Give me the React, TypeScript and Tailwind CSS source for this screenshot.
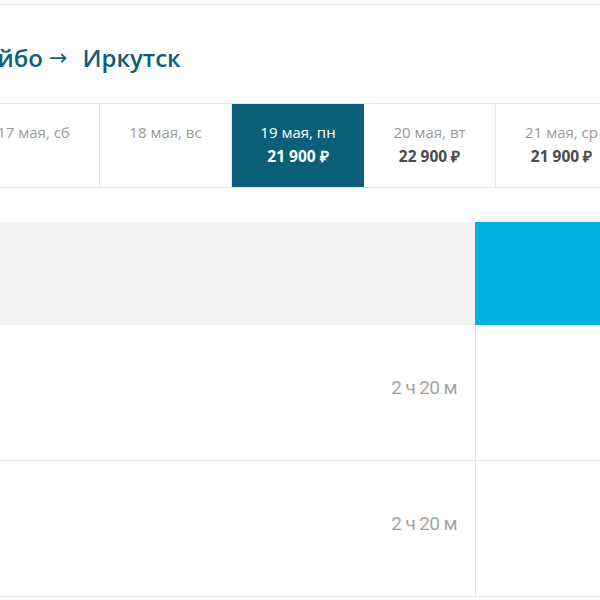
const days = [
  { date: '17 мая, сб', price: '' },
  { date: '18 мая, вс', price: '' },
  { date: '19 мая, пн', price: '21 900 ₽', active: true },
  { date: '20 мая, вт', price: '22 900 ₽' },
  { date: '21 мая, ср', price: '21 900 ₽' },
];

const flights = ['2 ч 20 м', '2 ч 20 м'];

const App = () => {
  return (
    <div className="w-[600px] h-[600px] overflow-hidden bg-white font-['Open_Sans',sans-serif]">
      <div className="h-[5px] border-b border-[#e8e8e8]" />

      <div className="pt-[37px] h-[98px] whitespace-nowrap">
        {/* город вылета уходит за левый край */}
        <h1 className="flex items-center text-[24px] leading-[32px] font-semibold text-[#0e5f79]">
          <span className="w-[43px] flex justify-end">Хайбо</span>
          <span className="ml-[6px] font-['DejaVu_Sans',sans-serif] text-[22px] font-normal">→</span>
          <span className="ml-[15px]">Иркутск</span>
        </h1>
      </div>

      <div className="flex ml-[-32px] border-y border-[#e6e6e6] h-[85px]">
        {days.map((d) => (
          <div
            key={d.date}
            className={
              d.active
                ? 'w-[132px] shrink-0 bg-[#0b5f79] text-white text-center pt-[16px]'
                : 'w-[132px] shrink-0 border-r border-[#e6e6e6] text-center pt-[16px]'
            }
          >
            <div
              className={
                d.active
                  ? 'text-[15px] leading-[24px] text-white'
                  : 'text-[15px] leading-[24px] text-[#9a9a9a]'
              }
            >
              {d.date}
            </div>
            {d.price && (
              <div
                className={
                  d.active
                    ? 'text-[15.5px] leading-[25px] font-bold text-white'
                    : 'text-[15.5px] leading-[25px] font-bold text-[#4a4a4a]'
                }
              >
                {d.price}
              </div>
            )}
          </div>
        ))}
      </div>

      <div className="mt-[34px] grid grid-cols-[475px_1fr]">
        <div className="h-[103px] bg-[#f3f3f3]" />
        <div className="h-[103px] bg-[#02b1dd]" />

        {flights.map((f, i) => (
          <div key={i} className="contents">
            <div className="h-[136px] border-b border-[#e6e6e6] flex items-center justify-end pr-[18px] pb-[8px]">
              <span className="font-['Roboto',sans-serif] text-[19px] tracking-[-0.6px] text-[#a3a3a3]">
                {f}
              </span>
            </div>
            <div className="h-[136px] border-b border-l border-[#e6e6e6]" />
          </div>
        ))}
      </div>
    </div>
  );
};

export default App;
